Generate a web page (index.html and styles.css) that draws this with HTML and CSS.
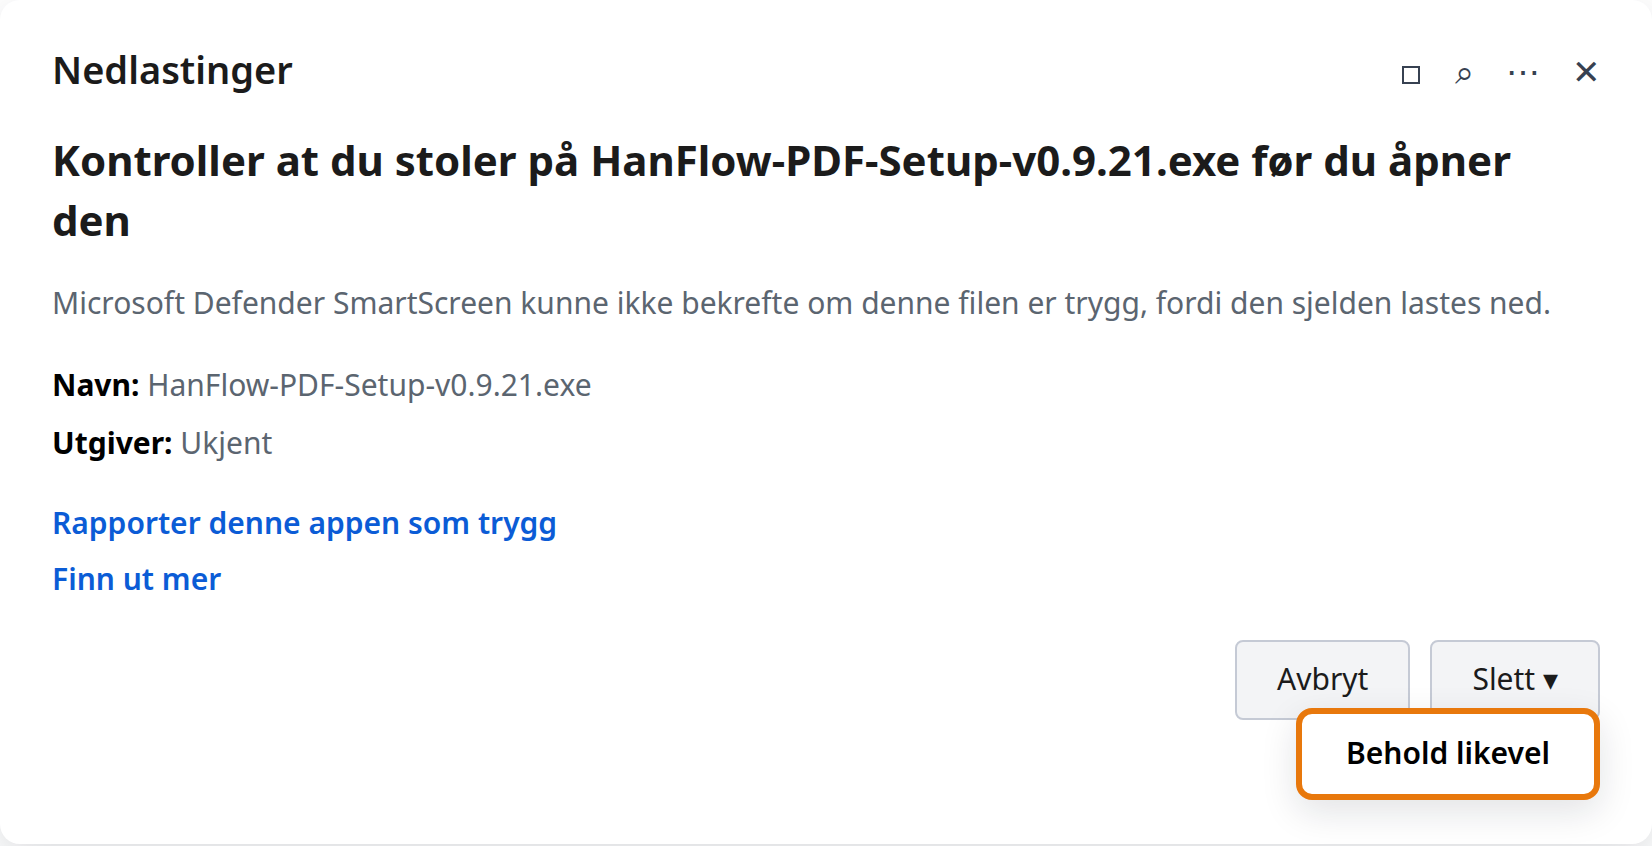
FILE: index.html
```
<!DOCTYPE html>
<html lang="nb">
<head>
    <meta charset="UTF-8">
    <meta name="viewport" content="width=device-width, initial-scale=1.0">
    <title>Nedlastinger</title>
    <link rel="stylesheet" href="styles.css">
</head>
<body>
    <main class="dialog">
        <header class="top">
            <h1>Nedlastinger</h1>
            <div class="tools">
                <button type="button" aria-label="Mappe">
                    <svg width="24" height="18" viewBox="0 0 24 18" fill="none" stroke="currentColor" stroke-width="2">
                        <rect x="4" y="1" width="16" height="16"/>
                    </svg>
                </button>
                <button type="button" aria-label="Søk">⌕</button>
                <button type="button" aria-label="Mer">⋯</button>
                <button type="button" aria-label="Lukk">✕</button>
            </div>
        </header>

        <h2>Kontroller at du stoler på HanFlow-PDF-Setup-v0.9.21.exe før du åpner den</h2>
        <p class="message">Microsoft Defender SmartScreen kunne ikke bekrefte om denne filen er trygg, fordi den sjelden lastes ned.</p>

        <div class="meta">
            <p><strong>Navn:</strong> HanFlow-PDF-Setup-v0.9.21.exe</p>
            <p><strong>Utgiver:</strong> Ukjent</p>
        </div>

        <div class="links">
            <a href="#">Rapporter denne appen som trygg</a>
            <a href="#">Finn ut mer</a>
        </div>

        <div class="actions">
            <button type="button" class="btn">Avbryt</button>
            <button type="button" class="btn">Slett ▾</button>
            <button type="button" class="keep">Behold likevel</button>
        </div>
    </main>
</body>
</html>
```
FILE: styles.css
```
* {
    box-sizing: border-box;
}
body {
    margin: 0;
    min-height: 100vh;
    background-color: #fff;
    font-family: "Noto Sans", sans-serif;
    font-size: 30px;
    color: #000;
}
h1, h2, p {
    margin: 0;
}
button {
    font-family: inherit;
    cursor: pointer;
}
.dialog {
    padding: 40px 52px 124px;
    background-color: #fff;
    border-radius: 20px;
    box-shadow: 0 16px 48px rgba(15, 23, 42, 0.15);
}
.top {
    display: flex;
    justify-content: space-between;
    align-items: center;
}
h1 {
    font-size: 38px;
    font-weight: 600;
    line-height: 58px;
    color: #1b1b1b;
}
.tools {
    display: flex;
    gap: 32px;
}
.tools button {
    padding: 4px 0 0;
    border: none;
    background: none;
    font-size: 34px;
    line-height: 54px;
    color: #374151;
}
h2 {
    margin-top: 32px;
    font-size: 42px;
    font-weight: 700;
    line-height: 60px;
    color: #1b1b1b;
}
.message {
    margin-top: 28px;
    line-height: 50px;
    color: #5b6570;
}
.meta {
    margin-top: 28px;
    line-height: 58px;
    color: #5b6570;
}
.meta strong {
    font-weight: 700;
    color: #000;
}
.links {
    display: flex;
    flex-direction: column;
    align-items: flex-start;
    margin-top: 23px;
    line-height: 56px;
}
.links a {
    font-weight: 600;
    color: #0b5cd6;
    text-decoration: none;
}
.actions {
    position: relative;
    display: flex;
    justify-content: flex-end;
    gap: 20px;
    margin-top: 33px;
}
.btn {
    height: 80px;
    padding: 0 40px 4px;
    border: 2px solid #c5cad5;
    border-radius: 8px;
    background-color: #f3f4f6;
    font-size: 30px;
    color: #1b1b1b;
}
.keep {
    position: absolute;
    top: 68px;
    right: 0;
    height: 92px;
    padding: 0 44px 4px;
    border: 6px solid #e8780c;
    border-radius: 16px;
    background-color: #fff;
    box-shadow: 0 12px 36px rgba(15, 23, 42, 0.12);
    font-size: 30px;
    font-weight: 600;
    color: #000;
}
```
